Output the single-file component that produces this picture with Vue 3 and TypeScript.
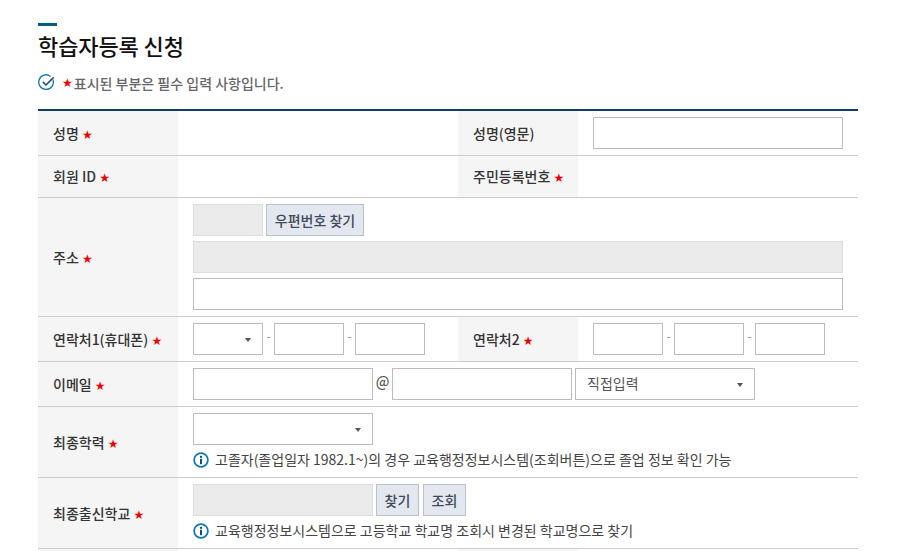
<script setup lang="ts">
const infoA = '고졸자(졸업일자 1982.1~)의 경우 교육행정정보시스템(조회버튼)으로 졸업 정보 확인 가능'
const infoB = '교육행정정보시스템으로 고등학교 학교명 조회시 변경된 학교명으로 찾기'
</script>

<template>
  <div class="page">
    <div class="bar"></div>
    <h1 class="title">학습자등록 신청</h1>
    <p class="note">
      <svg class="check" width="17" height="17" viewBox="0 0 17 17" fill="none">
        <path d="M14.9 5.6A7.3 7.3 0 1 1 12.6 2.4" stroke="#0b76b8" stroke-width="1.3" />
        <path d="M4.8 7.9 8 11 15.6 3.4" stroke="#174a7c" stroke-width="1.5" />
      </svg>
      <span class="star note-star">★</span>
      <span>표시된 부분은 필수 입력 사항입니다.</span>
    </p>

    <table class="form">
      <colgroup>
        <col class="c1" /><col class="c2" /><col class="c3" /><col class="c4" />
      </colgroup>
      <tbody>
        <tr class="r1">
          <th>성명 <span class="star">★</span></th>
          <td></td>
          <th>성명(영문)</th>
          <td><span class="inp w250"></span></td>
        </tr>
        <tr class="r2">
          <th>회원 ID <span class="star">★</span></th>
          <td></td>
          <th>주민등록번호 <span class="star">★</span></th>
          <td></td>
        </tr>
        <tr class="r3">
          <th>주소 <span class="star">★</span></th>
          <td colspan="3">
            <div class="line">
              <span class="inp off w70"></span>
              <button class="btn zip" type="button">우편번호 찾기</button>
            </div>
            <div class="line gap5"><span class="inp off w650"></span></div>
            <div class="line gap5"><span class="inp w650"></span></div>
          </td>
        </tr>
        <tr class="r4">
          <th>연락처1(휴대폰) <span class="star">★</span></th>
          <td>
            <div class="line">
              <span class="inp w70 sel"><i class="caret"></i></span>
              <span class="dash">-</span>
              <span class="inp w70"></span>
              <span class="dash">-</span>
              <span class="inp w70"></span>
            </div>
          </td>
          <th>연락처2 <span class="star">★</span></th>
          <td>
            <div class="line">
              <span class="inp w70"></span>
              <span class="dash">-</span>
              <span class="inp w70"></span>
              <span class="dash">-</span>
              <span class="inp w70"></span>
            </div>
          </td>
        </tr>
        <tr class="r5">
          <th>이메일 <span class="star">★</span></th>
          <td colspan="3">
            <div class="line">
              <span class="inp w180"></span>
              <span class="at">@</span>
              <span class="inp w180"></span>
              <span class="inp w180 sel mail">직접입력<i class="caret"></i></span>
            </div>
          </td>
        </tr>
        <tr class="r6">
          <th>최종학력 <span class="star">★</span></th>
          <td colspan="3">
            <div class="line"><span class="inp w180 sel"><i class="caret"></i></span></div>
            <div class="info">
              <svg class="i" width="16" height="16" viewBox="0 0 16 16" fill="none">
                <circle cx="8" cy="8" r="6.9" stroke="#0b76b8" stroke-width="1.7" />
                <rect x="7" y="3.8" width="2" height="2" fill="#174a7c" />
                <rect x="7" y="6.8" width="2" height="5.4" fill="#174a7c" />
              </svg>
              <span class="info-text">{{ infoA }}</span>
            </div>
          </td>
        </tr>
        <tr class="r6">
          <th>최종출신학교 <span class="star">★</span></th>
          <td colspan="3">
            <div class="line">
              <span class="inp off w180"></span>
              <button class="btn small" type="button">찾기</button>
              <button class="btn small next" type="button">조회</button>
            </div>
            <div class="info">
              <svg class="i" width="16" height="16" viewBox="0 0 16 16" fill="none">
                <circle cx="8" cy="8" r="6.9" stroke="#0b76b8" stroke-width="1.7" />
                <rect x="7" y="3.8" width="2" height="2" fill="#174a7c" />
                <rect x="7" y="6.8" width="2" height="5.4" fill="#174a7c" />
              </svg>
              <span class="info-text">{{ infoB }}</span>
            </div>
          </td>
        </tr>
        <tr class="r1">
          <th></th>
          <td></td>
          <th></th>
          <td></td>
        </tr>
      </tbody>
    </table>
  </div>
</template>

<style>
html, body { margin: 0; background: #fff; overflow: hidden; }
</style>

<style scoped>
.page {
  width: 820px;
  height: 528px;
  overflow: hidden;
  padding: 23px 0 0 38px;
  font-family: "Noto Sans CJK KR", "Noto Sans", sans-serif;
  color: #333;
  font-size: 14px;
}
.bar { width: 19px; height: 3px; background: #005a8c; }
.title {
  margin: 1px 0 0;
  height: 36px;
  font-size: 22px;
  line-height: 36px;
  font-weight: 500;
  color: #111;
  letter-spacing: -0.1px;
}
.note {
  display: flex;
  align-items: center;
  height: 20px;
  margin: 10px 0 0 0;
  padding-bottom: 1px;
  line-height: 20px;
  font-size: 14px;
  font-weight: 500;
  color: #666;
}
.check { margin-right: 7px; margin-top: -2px; }
.star { color: #f00000; font-size: 12px; line-height: 1; font-weight: 700; font-family: "DejaVu Sans", sans-serif; }
.note-star { margin-right: 1px; }
.form {
  width: 820px;
  margin-top: 15px;
  border-collapse: collapse;
  table-layout: fixed;
  border-top: 2px solid #123a6b;
}
.c1 { width: 140px; }
.c2 { width: 280px; }
.c3 { width: 120px; }
.c4 { width: 280px; }
th {
  padding: 0 0 0 15px;
  background: #f5f5f5;
  border-bottom: 1px solid #ccc;
  text-align: left;
  font-size: 14px;
  font-weight: 500;
  color: #333;
}
td {
  padding: 0 15px;
  border-bottom: 1px solid #ccc;
  vertical-align: middle;
}
.r1 { height: 45px; }
.r2 { height: 42px; }
.r3 { height: 119px; }
.r4, .r5 { height: 45px; }
.r6 { height: 71px; }
.r6 td { vertical-align: top; padding-top: 6px; }
.line { display: flex; align-items: stretch; height: 32px; }
.gap5 { margin-top: 5px; }
.inp {
  display: block;
  position: relative;
  box-sizing: border-box;
  height: 32px;
  border: 1px solid #bbb;
  background: #fff;
}
.off { background: #ebebeb; border-color: #ddd; }
.w70 { width: 70px; }
.w180 { width: 180px; }
.w250 { width: 250px; }
.w650 { width: 650px; }
.caret {
  position: absolute;
  right: 11px;
  top: 14px;
  width: 0;
  height: 0;
  border-left: 3.5px solid transparent;
  border-right: 3.5px solid transparent;
  border-top: 4px solid #555;
}
.mail { margin-left: 3px; padding-left: 11px; line-height: 28px; font-size: 14px; color: #555; }
.dash { width: 11px; text-align: center; font-size: 12px; line-height: 26px; color: #888; }
.at { width: 19px; text-align: center; font-size: 14px; font-weight: 500; line-height: 26px; color: #555; }
.btn {
  box-sizing: border-box;
  height: 32px;
  margin: 0 0 0 3px;
  padding: 0;
  border: 1px solid #bbc1cc;
  background: #e3e7ef;
  font-family: inherit;
  font-size: 14px;
  font-weight: 500;
  color: #3f4a5a;
}
.zip { width: 98px; }
.small { width: 43px; }
.next { margin-left: 4px; }
.info {
  display: flex;
  align-items: center;
  height: 20px;
  margin-top: 5px;
  font-size: 14px;
  color: #444;
}
.info-text { position: relative; top: -1px; }
.i { margin-right: 6px; flex: none; }
</style>
